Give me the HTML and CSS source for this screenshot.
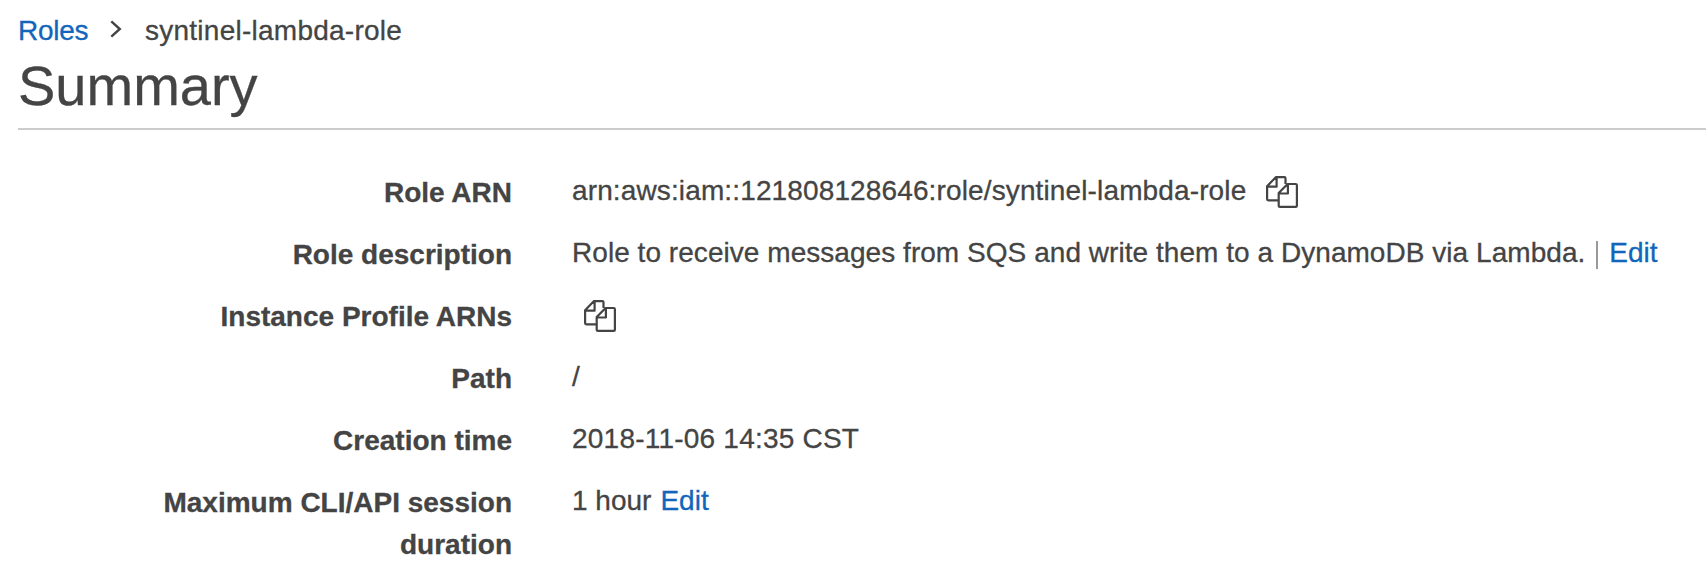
FILE: index.html
```html
<!DOCTYPE html>
<html lang="en">
<head>
<meta charset="utf-8">
<title>Summary</title>
<link rel="stylesheet" href="styles.css">
</head>
<body>
<svg class="defs" width="0" height="0" aria-hidden="true">
  <symbol id="copy" viewBox="0 0 32 32">
    <path d="M12.3 24.3H2.3Q1.1 24.3 1.1 23.1V10.2L10 1.1h8.3Q19.5 1.1 19.5 2.3V8M10.6 1.5v9.2H1.5M21.6 8h8.1Q30.9 8 30.9 9.2v20.5Q30.9 30.9 29.7 30.9H13.9Q12.7 30.9 12.7 29.7V17.1zM21.9 8.4v9.1h-8.7"/>
  </symbol>
</svg>
<nav class="breadcrumb">
  <a class="link root" href="#">Roles</a>
  <svg class="chevron" viewBox="0 0 12 18"><path d="M1.3 1.3 9.8 9 1.3 16.7"/></svg>
  <span class="current">syntinel-lambda-role</span>
</nav>
<h1 class="title">Summary</h1>
<dl class="details">
  <dt class="label">Role ARN</dt>
  <dd class="value"><span class="arn">arn:aws:iam::121808128646:role/syntinel-lambda-role</span><svg class="copy"><use href="#copy"/></svg></dd>
  <dt class="label">Role description</dt>
  <dd class="value"><span class="description">Role to receive messages from SQS and write them to a DynamoDB via Lambda.</span><span class="divider"></span><a class="link" href="#">Edit</a></dd>
  <dt class="label">Instance Profile ARNs</dt>
  <dd class="value"><svg class="copy copy-alone"><use href="#copy"/></svg></dd>
  <dt class="label">Path</dt>
  <dd class="value path">/</dd>
  <dt class="label">Creation time</dt>
  <dd class="value time">2018-11-06 14:35 CST</dd>
  <dt class="label">Maximum CLI/API session duration</dt>
  <dd class="value"><span class="hours">1 hour</span><a class="link" href="#">Edit</a></dd>
</dl>
</body>
</html>
```
FILE: styles.css
```css
body {
  margin: 0;
  padding: 10px 0 0 18px;
  background: #fff;
  color: #444;
  font: 28px/42px "Liberation Sans", Arial, sans-serif;
  -webkit-text-stroke: 0.3px currentColor;
  overflow: hidden;
}
.defs { display: none; }
.link { color: #1166bb; text-decoration: none; }
.breadcrumb { display: flex; height: 42px; }
.root { width: 70px; letter-spacing: -0.25px; }
.current { letter-spacing: 0.25px; }
.chevron {
  width: 12px;
  height: 18px;
  margin: 10px 23px 0 22px;
  fill: none;
  stroke: #444;
  stroke-width: 2.4;
}
.title {
  margin: 2px 0 0;
  height: 74px;
  border-bottom: 2px solid #ccc;
  font-size: 56px;
  font-weight: 400;
  line-height: 63px;
}
.details {
  display: grid;
  grid-template-columns: 354px 1fr;
  column-gap: 60px;
  row-gap: 20px;
  margin: 40px 0 0 140px;
}
.label { margin-top: 2px; margin-bottom: -2px; font-weight: 700; text-align: right; }
.value { display: flex; height: 42px; margin: 0; white-space: nowrap; }
.arn { letter-spacing: 0.13px; }
.description { letter-spacing: 0.045px; }
.time { letter-spacing: 0.22px; }
.copy {
  width: 32px;
  height: 32px;
  margin: 6px 0 0 20px;
  fill: none;
  stroke: #444;
  stroke-width: 2.2;
  stroke-linejoin: round;
}
.copy-alone { margin-left: 12px; }
.divider { width: 2px; height: 28px; margin: 9px 11px 0 11px; background: #999; }
.hours { margin-right: 9px; }
```
